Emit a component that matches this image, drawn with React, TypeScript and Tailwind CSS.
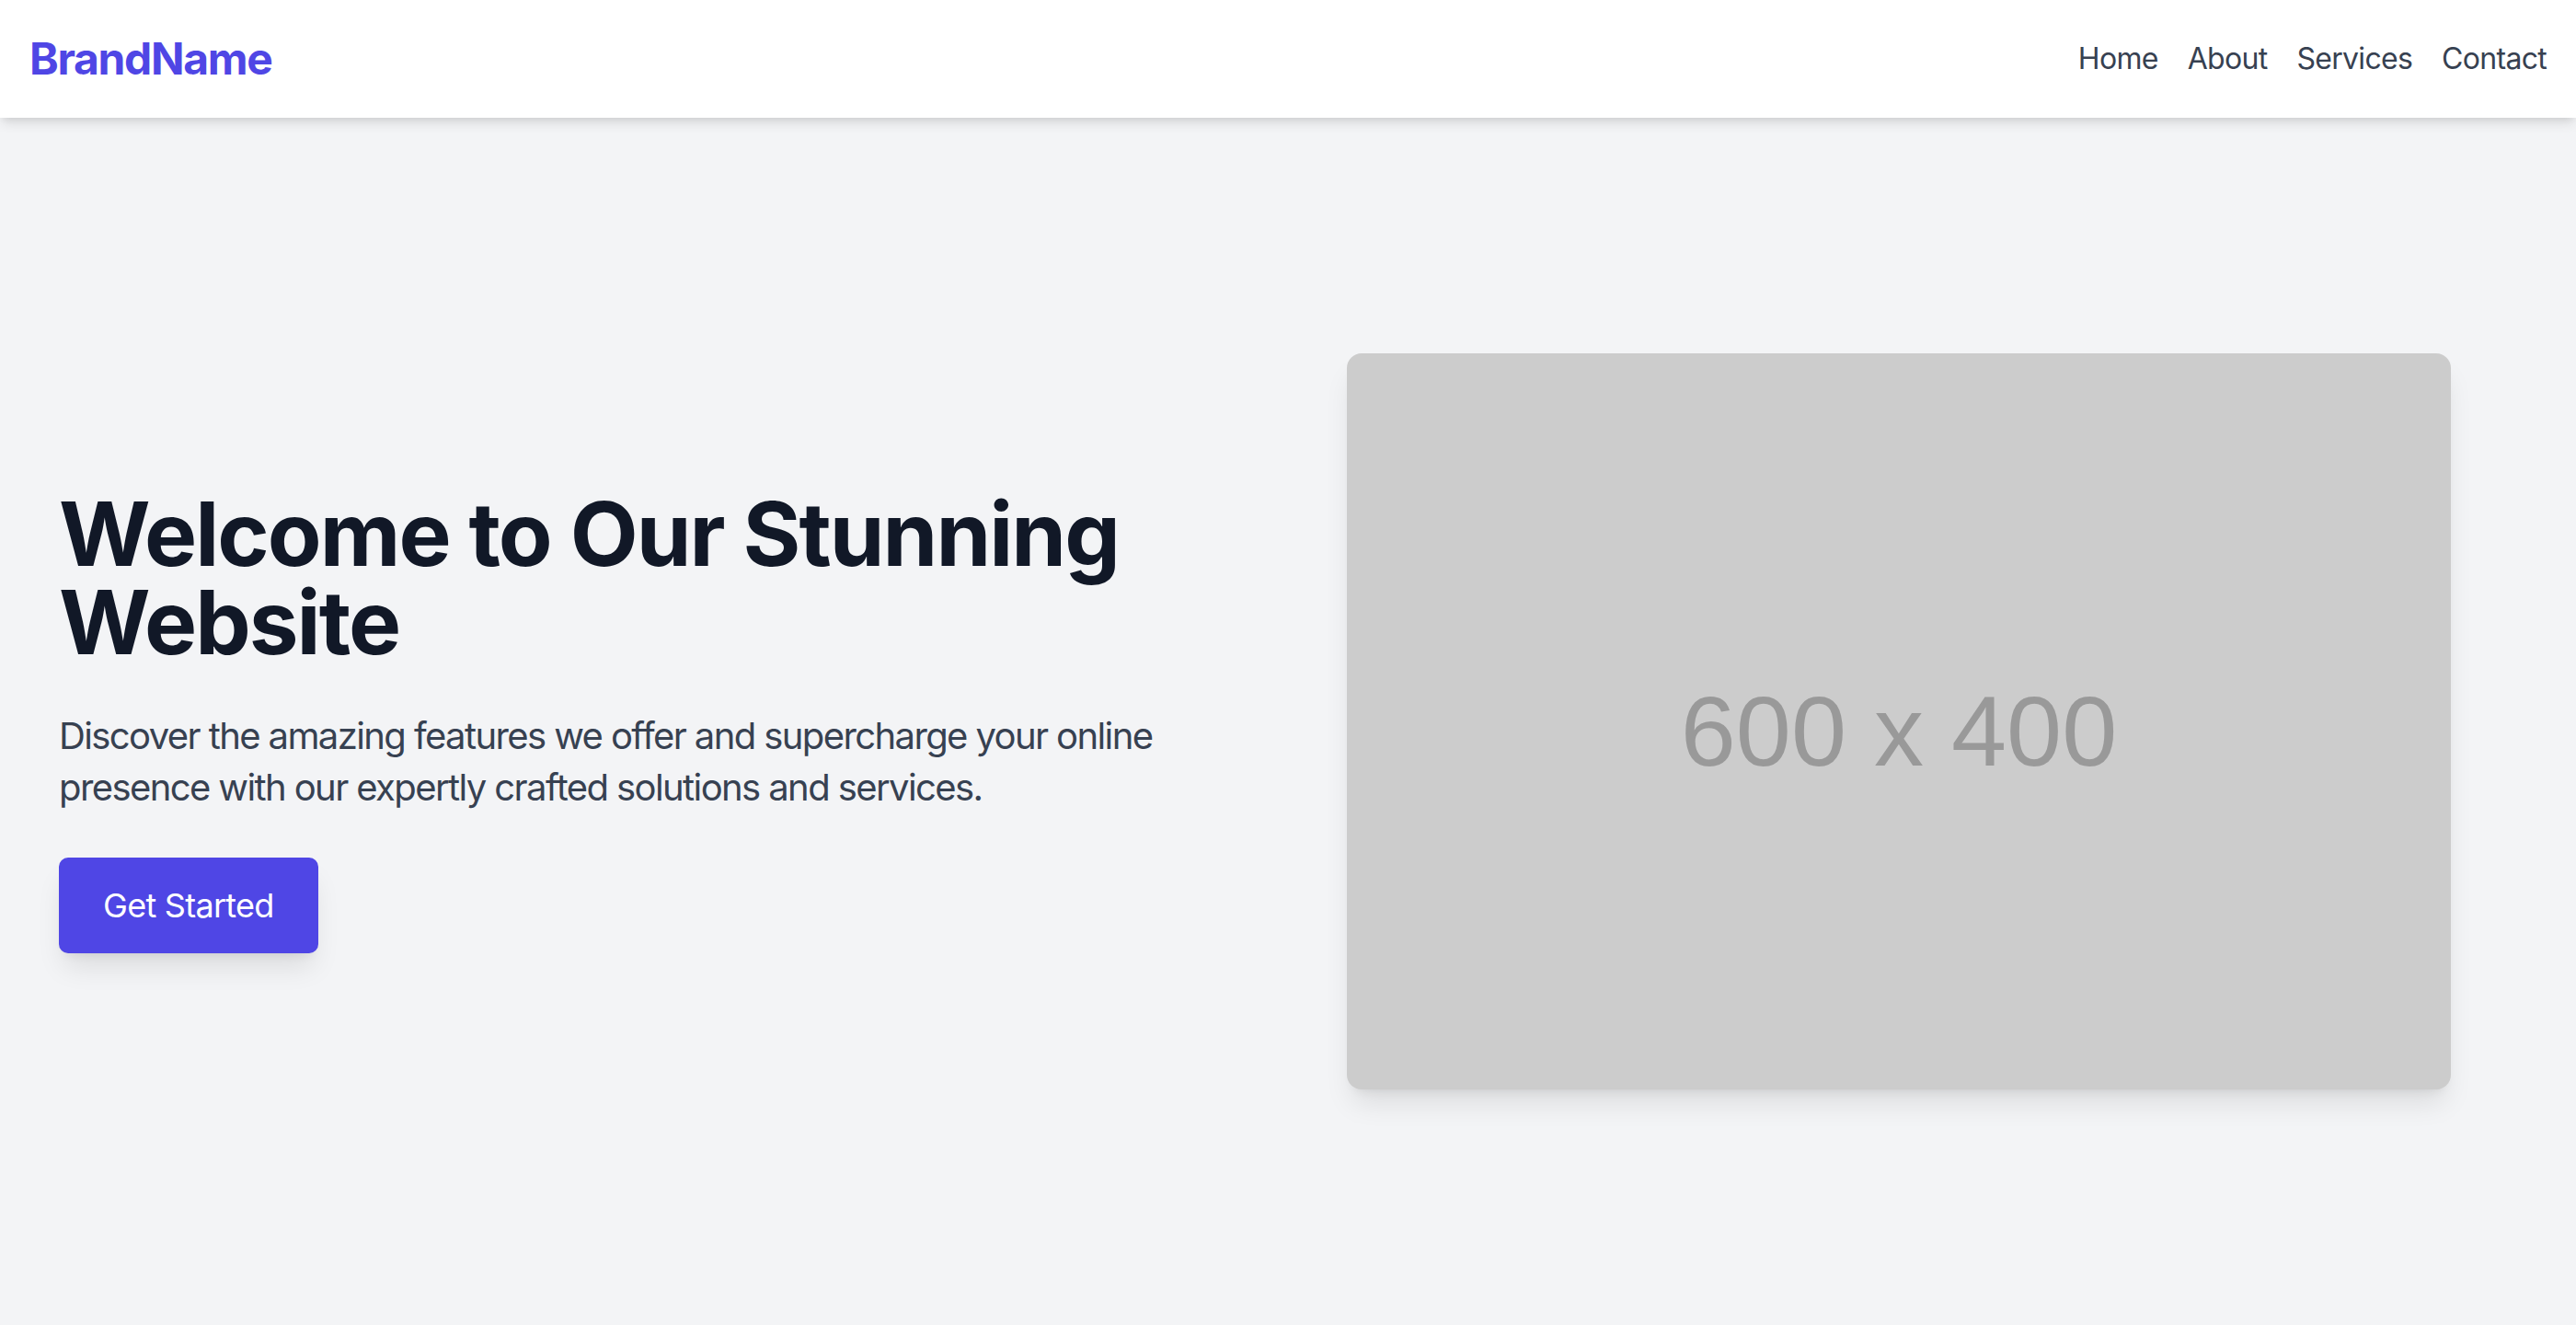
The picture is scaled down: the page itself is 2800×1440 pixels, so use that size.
import React from 'react';

const links = ['Home', 'About', 'Services', 'Contact'];

function Navbar() {
  return (
    <nav className="relative z-10 flex h-32 items-center justify-between bg-white px-8 shadow-[0_8px_12px_-2px_rgba(0,0,0,0.1),0_4px_8px_-4px_rgba(0,0,0,0.1)]">
      <a href="#" className="text-5xl font-bold leading-none tracking-[-0.028em] text-[#4f46e5]">
        BrandName
      </a>
      <div className="flex gap-8">
        {links.map((l) => (
          <a key={l} href="#" className="text-[32px] leading-[48px] tracking-[-0.022em] text-[#374151]">
            {l}
          </a>
        ))}
      </div>
    </nav>
  );
}

function Hero() {
  return (
    <section className="flex flex-1 items-center bg-[#f3f4f6] px-16">
      <div className="w-1/2">
        <h1 className="mb-12 text-8xl font-bold leading-none tracking-[-0.02em] text-[#111827]">
          Welcome to Our Stunning Website
        </h1>
        <p className="mb-12 text-[40px] leading-[56px] tracking-[-0.04em] text-[#374151]">
          Discover the amazing features we offer and supercharge your online presence with our expertly crafted solutions and services.
        </p>
        <a
          href="#"
          className="inline-block rounded-[10px] bg-[#4f46e5] px-12 py-6 text-4xl leading-[56px] tracking-[-0.02em] text-white shadow-[0_20px_30px_-6px_rgba(0,0,0,0.1),0_8px_12px_-8px_rgba(0,0,0,0.1)]"
        >
          Get Started
        </a>
      </div>
      <div className="flex w-1/2 justify-center pr-2">
        {/* placeholder image 600 x 400 */}
        <div className="flex h-[800px] w-[1200px] items-center justify-center rounded-2xl bg-[#cccccc] shadow-[0_20px_30px_-6px_rgba(0,0,0,0.1),0_8px_12px_-8px_rgba(0,0,0,0.1)]">
          <span className="mt-[22px] font-['Liberation_Sans',Arial,sans-serif] text-[108px] leading-none text-[#999999]">
            600 x 400
          </span>
        </div>
      </div>
    </section>
  );
}

export default function App() {
  return (
    <div className="flex h-[1440px] flex-col font-['Inter',sans-serif]">
      <Navbar />
      <Hero />
    </div>
  );
}
